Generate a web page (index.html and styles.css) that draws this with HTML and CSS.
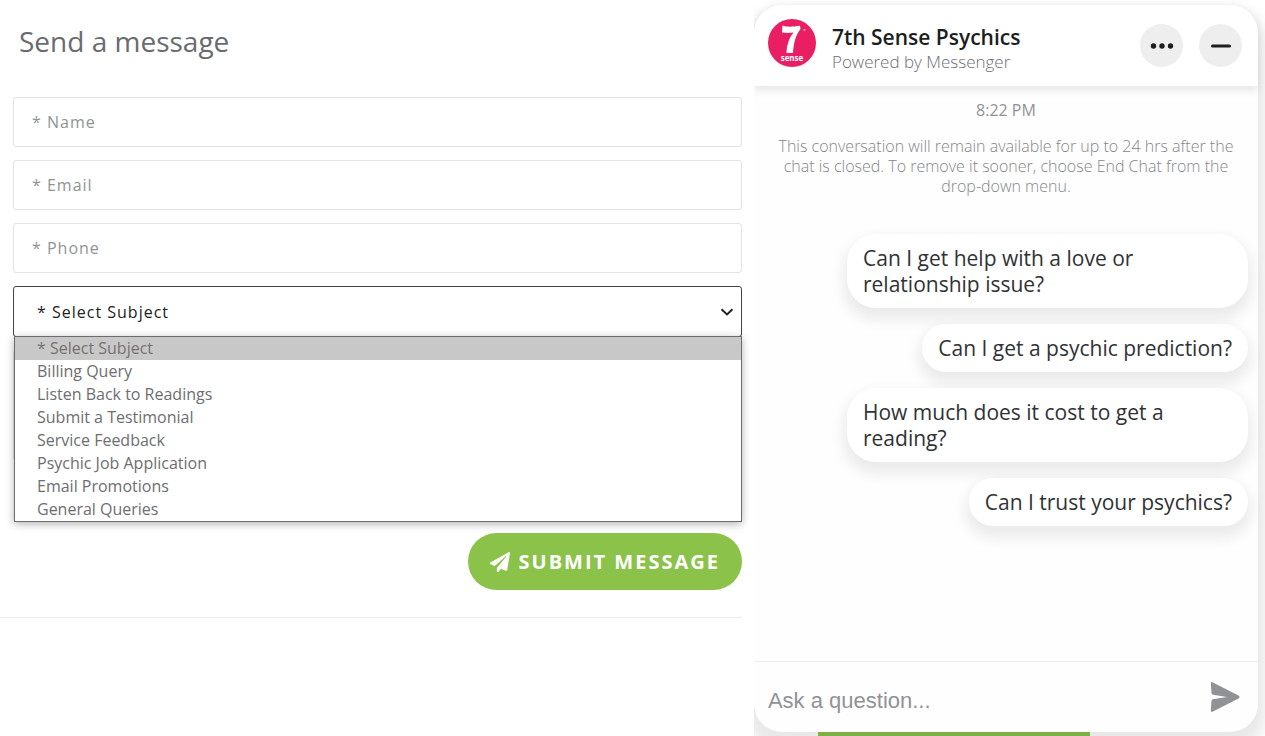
FILE: index.html
```html
<!DOCTYPE html>
<html lang="en">
<head>
    <meta charset="UTF-8">
    <meta name="viewport" content="width=device-width, initial-scale=1.0">
    <title>Send a message</title>
    <link rel="stylesheet" href="styles.css">
</head>
<body>
    <main class="contact">
        <h1 class="contact-title">Send a message</h1>
        <form class="contact-form">
            <input type="text" class="field" name="name" placeholder="* Name" aria-label="Name">
            <input type="email" class="field" name="email" placeholder="* Email" aria-label="Email">
            <input type="tel" class="field" name="phone" placeholder="* Phone" aria-label="Phone">
            <div class="subject">
                <select class="field subject-select" name="subject" aria-label="Subject">
                    <option>* Select Subject</option>
                    <option>Billing Query</option>
                    <option>Listen Back to Readings</option>
                    <option>Submit a Testimonial</option>
                    <option>Service Feedback</option>
                    <option>Psychic Job Application</option>
                    <option>Email Promotions</option>
                    <option>General Queries</option>
                </select>
                <svg class="subject-arrow" viewBox="0 0 14 8" aria-hidden="true">
                    <path d="M1.5 1.2 7 6.4 12.500 1.200" fill="none" stroke="#222" stroke-width="2"/>
                </svg>
                <ul class="subject-list" role="listbox" aria-label="Subject options">
                    <li class="subject-option selected" role="option" aria-selected="true">* Select Subject</li>
                    <li class="subject-option" role="option">Billing Query</li>
                    <li class="subject-option" role="option">Listen Back to Readings</li>
                    <li class="subject-option" role="option">Submit a Testimonial</li>
                    <li class="subject-option" role="option">Service Feedback</li>
                    <li class="subject-option" role="option">Psychic Job Application</li>
                    <li class="subject-option" role="option">Email Promotions</li>
                    <li class="subject-option" role="option">General Queries</li>
                </ul>
            </div>
            <textarea class="field message" name="message" aria-label="Message"></textarea>
            <button type="submit" class="submit">
                <svg class="submit-icon" viewBox="0 0 512 512" aria-hidden="true">
                    <path fill="currentColor" d="M476 3.200 12.500 270.600c-18.100 10.400-15.800 35.600 2.200 43.200L121 358.400l287.300-253.200c5.500-4.900 13.300 2.600 8.600 8.300L176 407v80.500c0 23.600 28.500 32.900 42.500 15.800L282 426l124.600 52.200c14.200 6 30.400-2.900 33-18.200l72-432C515 7.800 493.300-6.800 476 3.200z"/>
                </svg>
                <span>SUBMIT MESSAGE</span>
            </button>
        </form>
    </main>

    <aside class="side">
        <section class="chat">
            <header class="chat-header">
                <svg class="chat-logo" viewBox="0 0 48 48" role="img" aria-label="7th Sense">
                    <circle cx="24" cy="24" r="24" fill="#ea1e63"/>
                    <path d="M14.500 6.500c4 1.500 9 1.500 17.500.300l.500 3.200c-5 6.500-6.800 13.500-7.500 24h-6.500c.3-9 3-15.500 7-20.500-4 .5-7.500.5-11.500 0z" fill="#fff"/>
                    <circle cx="36.500" cy="11" r="1" fill="#f8a9c4"/>
                    <text class="logo-text" x="24" y="42" text-anchor="middle">sense</text>
                </svg>
                <div class="chat-heading">
                    <h2 class="chat-name">7th Sense Psychics</h2>
                    <p class="chat-powered">Powered by Messenger</p>
                </div>
                <button type="button" class="round-button" aria-label="Menu">
                    <svg viewBox="0 0 24 24" width="24" height="24">
                        <g fill="#1c1e21">
                            <circle cx="3.500" cy="12" r="2.700"/>
                            <circle cx="12" cy="12" r="2.700"/>
                            <circle cx="20.500" cy="12" r="2.700"/>
                        </g>
                    </svg>
                </button>
                <button type="button" class="round-button" aria-label="Minimise">
                    <svg viewBox="0 0 24 24" width="24" height="24">
                        <path d="M3.500 12h17" stroke="#1c1e21" stroke-width="3" stroke-linecap="round"/>
                    </svg>
                </button>
            </header>
            <div class="chat-body">
                <p class="chat-time">8:22 PM</p>
                <p class="chat-note">This conversation will remain available for up to 24 hrs after the chat is closed. To remove it sooner, choose End Chat from the drop-down menu.</p>
                <div class="questions">
                    <button type="button" class="question">Can I get help with a love or relationship issue?</button>
                    <button type="button" class="question">Can I get a psychic prediction?</button>
                    <button type="button" class="question">How much does it cost to get a reading?</button>
                    <button type="button" class="question">Can I trust your psychics?</button>
                </div>
            </div>
            <form class="chat-form">
                <input type="text" class="chat-input" placeholder="Ask a question..." aria-label="Ask a question">
                <button type="button" class="send" aria-label="Send">
                    <svg viewBox="0 0 30 32" width="30" height="32">
                        <path d="M2.500 1.200 28.500 14.500q2 1.500 0 3L2.500 30.800Q.8 31.300.8 29.500L1.500 20Q1.700 18.500 3 18.300L17 16 3 13.700Q1.700 13.500 1.500 12L.8 2.500Q.8.700 2.500 1.200z" fill="#919296"/>
                    </svg>
                </button>
            </form>
        </section>
        <div class="page-button"></div>
    </aside>
</body>
</html>
```
FILE: styles.css
```css
* {
    box-sizing: border-box;
}
body {
    margin: 0;
    display: grid;
    grid-template-columns: 59.6% 1fr;
    min-height: 100vh;
    font-family: "Open Sans", sans-serif;
    background-color: #fff;
}
.contact {
    padding: 20px 12px 0 0;
}
.contact-title {
    margin: 0;
    padding-left: 19px;
    font-size: 28px;
    font-weight: 400;
    line-height: 42px;
    color: #6a6b6f;
}
.contact-form {
    display: flex;
    flex-direction: column;
    gap: 13px;
    padding: 35px 0 27px 13px;
    border-bottom: 1px solid #ececec;
}
.field {
    width: 100%;
    height: 50px;
    padding: 0 18px;
    border: 1px solid #e3e3e3;
    border-radius: 3px;
    background-color: #fff;
    font-family: inherit;
    font-size: 16px;
    letter-spacing: 1px;
    color: #222;
}
.field::placeholder {
    color: #8e9494;
}
.subject {
    position: relative;
}
.subject-select {
    display: block;
    height: 51px;
    padding: 0 23px;
    border-color: #444;
    appearance: none;
}
.subject-arrow {
    position: absolute;
    top: 22px;
    right: 8px;
    width: 14px;
    height: 8px;
}
.subject-list {
    position: absolute;
    top: 50px;
    left: 1px;
    right: 0;
    margin: 0;
    padding: 0;
    border: 1px solid #6b6b70;
    background-color: #fff;
    box-shadow: 0 2px 8px rgba(0, 0, 0, 0.3);
    list-style: none;
}
.subject-option {
    padding-left: 22px;
    font-size: 16px;
    line-height: 23px;
    color: #6d6e71;
}
.subject-option.selected {
    background-color: #c8c8c8;
    color: #77716f;
}
.message {
    height: 111px;
    resize: none;
}
.submit {
    display: flex;
    align-items: center;
    align-self: flex-end;
    gap: 9px;
    height: 57px;
    margin-top: 59px;
    padding: 0 22px;
    border: none;
    border-radius: 29px;
    background-color: #8bc34a;
    font-family: inherit;
    font-size: 20px;
    font-weight: 700;
    letter-spacing: 2px;
    color: #fff;
    cursor: pointer;
}
.submit-icon {
    width: 20px;
    height: 20px;
}
.side {
    display: flex;
    flex-direction: column;
    padding: 5px 7px 0 0;
    overflow: hidden;
}
.chat {
    flex: 1;
    display: flex;
    flex-direction: column;
    border-radius: 28px;
    background-color: #fefefe;
    box-shadow: 0 10px 14px 8px rgba(0, 0, 0, 0.09);
}
.chat-header {
    display: flex;
    align-items: flex-start;
    gap: 16px;
    height: 81px;
    padding: 14px 16px 0 14px;
    border-radius: 28px 28px 0 0;
    background-color: #fff;
    box-shadow: 0 4px 8px rgba(0, 0, 0, 0.1);
}
.chat-logo {
    width: 48px;
    height: 48px;
}
.logo-text {
    font-size: 8px;
    font-weight: 700;
    fill: #fff;
}
.chat-heading {
    flex: 1;
    padding-top: 5px;
}
.chat-name {
    margin: 0;
    font-size: 21px;
    font-weight: 600;
    line-height: 26px;
    color: #1c1e21;
}
.chat-powered {
    margin: 0;
    font-size: 17px;
    font-weight: 300;
    line-height: 24px;
    color: #6c6e73;
}
.round-button {
    display: flex;
    align-items: center;
    justify-content: center;
    width: 43px;
    height: 43px;
    margin-top: 5px;
    padding: 0;
    border: none;
    border-radius: 50%;
    background-color: #eee;
    cursor: pointer;
}
.chat-body {
    flex: 1;
    padding: 14px 10px 0;
}
.chat-time {
    margin: 0;
    font-size: 16px;
    line-height: 20px;
    text-align: center;
    color: #919296;
}
.chat-note {
    margin: 16px 0 0;
    padding: 0 10px;
    font-size: 16px;
    font-weight: 300;
    line-height: 20px;
    text-align: center;
    color: #85868a;
}
.questions {
    display: flex;
    flex-direction: column;
    align-items: flex-end;
    gap: 16px;
    margin-top: 38px;
}
.question {
    max-width: 401px;
    padding: 11px 16px;
    border: none;
    border-radius: 29px;
    background-color: #fff;
    box-shadow: 0 8px 14px 4px rgba(0, 0, 0, 0.08);
    font-family: inherit;
    font-size: 21px;
    font-weight: 400;
    line-height: 26px;
    text-align: left;
    color: #303236;
    cursor: pointer;
}
.chat-form {
    display: flex;
    align-items: center;
    height: 71px;
    padding: 0 18px 0 14px;
    border-top: 1px solid #ececec;
}
.chat-input {
    flex: 1;
    min-width: 0;
    height: 48px;
    padding: 8px 0 0;
    border: none;
    background: none;
    font-family: "Liberation Sans", Arial, sans-serif;
    font-size: 22px;
    color: #1c1e21;
}
.chat-input::placeholder {
    color: #919296;
}
.send {
    display: flex;
    padding: 0;
    border: none;
    background: none;
    cursor: pointer;
}
.page-button {
    position: relative;
    width: 54%;
    height: 4px;
    margin-left: 64px;
    background-color: #7fb045;
}
```
